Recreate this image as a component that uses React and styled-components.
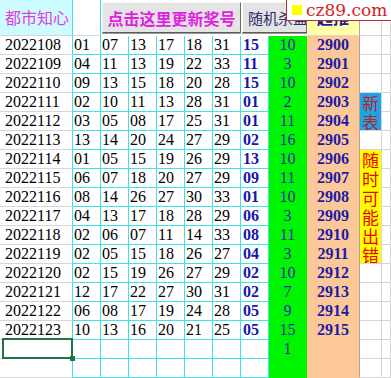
import React from 'react';
import styled, { createGlobalStyle } from 'styled-components';

const GlobalStyle = createGlobalStyle`
  body {
    margin: 0;
    background: #fff;
    overflow: hidden;
  }
`;

const cyan = '#3ee2e8';
const line = '#d6d6d6';
const cjk = '"Noto Sans CJK SC", "Liberation Sans", sans-serif';

const draws = [
  ['2022108', ['01', '07', '13', '17', '18', '31'], '15', 10, 2900],
  ['2022109', ['04', '11', '13', '19', '22', '33'], '11', 3, 2901],
  ['2022110', ['09', '13', '15', '18', '20', '28'], '15', 10, 2902],
  ['2022111', ['02', '10', '11', '13', '28', '31'], '01', 2, 2903],
  ['2022112', ['03', '05', '08', '17', '25', '31'], '01', 11, 2904],
  ['2022113', ['13', '14', '20', '24', '27', '29'], '02', 16, 2905],
  ['2022114', ['01', '05', '15', '19', '26', '29'], '13', 10, 2906],
  ['2022115', ['06', '07', '18', '20', '27', '29'], '09', 11, 2907],
  ['2022116', ['08', '14', '26', '27', '30', '33'], '01', 10, 2908],
  ['2022117', ['04', '13', '17', '18', '28', '29'], '06', 3, 2909],
  ['2022118', ['02', '06', '07', '11', '14', '33'], '08', 11, 2910],
  ['2022119', ['02', '05', '15', '18', '26', '27'], '04', 3, 2911],
  ['2022120', ['02', '15', '19', '26', '27', '29'], '02', 10, 2912],
  ['2022121', ['12', '17', '22', '27', '30', '31'], '02', 7, 2913],
  ['2022122', ['06', '08', '17', '19', '24', '28'], '05', 9, 2914],
  ['2022123', ['10', '13', '16', '20', '21', '25'], '05', 15, 2915],
  ['', ['', '', '', '', '', ''], '', 1, ''],
  ['', ['', '', '', '', '', ''], '', '', ''],
];

// notes in the side column: start row -> block
const notes = {
  3: { text: '新表', span: 2, tone: 'blue' },
  6: { text: '随时可能出错', span: 6, tone: 'yellow' },
};
const covered = [4, 7, 8, 9, 10, 11];

const Sheet = styled.div`
  position: relative;
  display: grid;
  grid-template-columns: 73px repeat(7, 28px) 38px 53px 22px 1fr;
  grid-template-rows: 36px repeat(18, 19px);
  width: 391px;
  height: 378px;
  overflow: hidden;
  font-family: "Liberation Serif", "Noto Sans CJK SC", serif;
  font-size: 16px;
  color: #000;
`;

const Cell = styled.div`
  box-sizing: border-box;
  grid-column: ${p => p.$c};
  border-right: 1px solid ${line};
  border-bottom: 1px solid ${line};
  line-height: 18px;
  white-space: nowrap;
  overflow: hidden;
`;

const TitleCell = styled(Cell)`
  background: #ccfcff;
  border-right-color: ${cyan};
  color: #e03ce0;
  font-family: ${cjk};
  line-height: 35px;
  padding-left: 5px;
`;

const HeadBlank = styled(Cell)`
  border-right-color: ${cyan};
`;

const SheetButton = styled.button`
  grid-column: ${p => p.$span};
  grid-row: 1;
  box-sizing: border-box;
  margin: 2px 0 3px 1px;
  padding: 0 0 0 ${p => (p.$loud ? '0' : '5px')};
  background: #e4e4e4;
  border: 1px solid;
  border-color: #f6f6f6 #6e6e6e #5a5a5a #f6f6f6;
  box-shadow: 0 1px 0 #9a9a9a;
  font-family: ${cjk};
  font-size: ${p => (p.$loud ? '16px' : '15px')};
  font-weight: ${p => (p.$loud ? 700 : 400)};
  color: ${p => (p.$loud ? '#e022e0' : '#2c2c6c')};
  text-align: ${p => (p.$loud ? 'center' : 'left')};
  white-space: nowrap;
  overflow: hidden;
  cursor: pointer;
`;

const HeadYellow = styled(Cell)`
  background: #ffffa8;
  border-right-color: #b0a492;
  color: #1c1ca0;
  font-family: ${cjk};
  font-weight: 700;
  line-height: 35px;
  text-align: center;
`;

const IdCell = styled(Cell)`
  grid-column: 1;
  border-right-color: ${cyan};
  padding-left: 5px;
  ${p => p.$selected && `
    position: relative;
    overflow: visible;
    z-index: 2;
    &::after {
      content: '';
      position: absolute;
      left: 2px;
      top: -2px;
      right: -1px;
      bottom: -1px;
      border: 2px solid #217346;
    }
    &::before {
      content: '';
      position: absolute;
      right: -3px;
      bottom: -3px;
      width: 5px;
      height: 5px;
      background: #217346;
      z-index: 1;
    }
  `}
`;

const NumCell = styled(Cell)`
  border-right-color: ${cyan};
  border-bottom-color: ${cyan};
  padding-left: ${p => (p.$blue ? '2px' : '1px')};
  font-weight: ${p => (p.$blue ? 700 : 400)};
  color: ${p => (p.$blue ? '#1616a6' : '#000')};
`;

const GreenCell = styled(Cell)`
  grid-column: 9;
  background: #00f400;
  border-color: #00f400;
  color: #2a2aa0;
  text-align: center;
`;

const OrangeCell = styled(Cell)`
  grid-column: 10;
  background: #fcc898;
  border-bottom-color: #fcc898;
  border-right-color: #b0a492;
  color: #1c1ca4;
  font-weight: 700;
  text-align: center;
`;

const NoteBlock = styled(Cell)`
  grid-column: 11;
  grid-row: span ${p => p.$span};
  display: flex;
  flex-direction: column;
  align-items: center;
  justify-content: center;
  font-family: ${cjk};
  font-size: 17px;
  line-height: 19px;
  background: ${p => (p.$tone === 'blue' ? '#1ea3e6' : '#ffff00')};
  color: ${p => (p.$tone === 'blue' ? '#b8242c' : '#f00000')};
`;

const Watermark = styled.div`
  position: absolute;
  top: 0;
  right: 0;
  box-sizing: border-box;
  width: 105px;
  height: 21px;
  display: flex;
  align-items: center;
  gap: 4px;
  padding-left: 5px;
  background: #fff;
  border-left: 1px solid #b03434;
  border-bottom: 1px solid #b03434;
  z-index: 3;
`;

const Square = styled.span`
  width: 10px;
  height: 10px;
  background: #ffff00;
`;

const Brand = styled.span`
  font-family: "DejaVu Serif", serif;
  font-size: 17px;
  line-height: 20px;
  color: #d42222;
`;

export default function App() {
  return (
    <>
      <GlobalStyle />
      <Sheet>
        <TitleCell $c={1}>都市知心</TitleCell>
        <HeadBlank $c={2} />
        <SheetButton $span="3 / 8" $loud>点击这里更新奖号</SheetButton>
        <SheetButton $span="8 / 10">随机杀蓝</SheetButton>
        <HeadYellow $c={10}>起推</HeadYellow>
        <Cell $c={11} />
        <Cell $c={12} />

        {draws.map(([id, reds, blue, green, issue], i) => {
          const note = notes[i];
          return (
            <React.Fragment key={i}>
              <IdCell $selected={i === 16}>{id}</IdCell>
              {reds.map((n, j) => (
                <NumCell key={j} $c={j + 2}>{n}</NumCell>
              ))}
              <NumCell $c={8} $blue>{blue}</NumCell>
              <GreenCell>{green}</GreenCell>
              <OrangeCell>{issue}</OrangeCell>
              {note ? (
                <NoteBlock $span={note.span} $tone={note.tone}>
                  {note.text.split('').map((ch, k) => (
                    <span key={k}>{ch}</span>
                  ))}
                </NoteBlock>
              ) : covered.includes(i) ? null : (
                <Cell $c={11} />
              )}
              <Cell $c={12} />
            </React.Fragment>
          );
        })}

        <Watermark>
          <Square />
          <Brand>cz89.com</Brand>
        </Watermark>
      </Sheet>
    </>
  );
}
